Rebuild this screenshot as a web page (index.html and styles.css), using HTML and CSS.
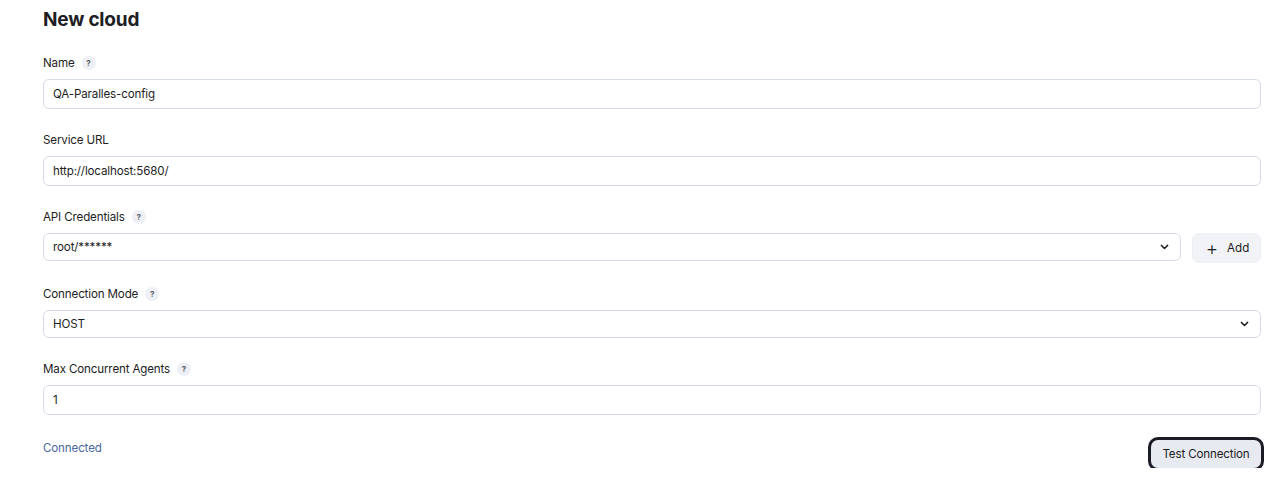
FILE: index.html
```html
<!DOCTYPE html>
<html lang="en">
<head>
	<meta charset="UTF-8">
	<title>New cloud</title>
	<link rel="stylesheet" href="styles.css">
</head>
<body>
	<div class="page">
		<h1 class="title">New cloud</h1>

		<div class="field">
			<div class="label">Name <span class="help">?</span></div>
			<div class="control input">QA-Paralles-config</div>
		</div>

		<div class="field">
			<div class="label">Service URL</div>
			<div class="control input">http://localhost:5680/</div>
		</div>

		<div class="field">
			<div class="label">API Credentials <span class="help">?</span></div>
			<div class="row">
				<div class="control select">
					<span>root/******</span>
					<svg class="chevron" viewBox="0 0 10 6" width="9" height="6"><path d="M1.5 1.2 L5 4.6 L8.5 1.2" fill="none" stroke="#1d1d22" stroke-width="1.6" stroke-linecap="round" stroke-linejoin="round"/></svg>
				</div>
				<button class="btn-add"><span class="plus">+</span>Add</button>
			</div>
		</div>

		<div class="field">
			<div class="label">Connection Mode <span class="help">?</span></div>
			<div class="control select">
				<span>HOST</span>
				<svg class="chevron" viewBox="0 0 10 6" width="9" height="6"><path d="M1.5 1.2 L5 4.6 L8.5 1.2" fill="none" stroke="#1d1d22" stroke-width="1.6" stroke-linecap="round" stroke-linejoin="round"/></svg>
			</div>
		</div>

		<div class="field">
			<div class="label">Max Concurrent Agents <span class="help">?</span></div>
			<div class="control input">1</div>
		</div>

		<div class="footer">
			<span class="status">Connected</span>
			<button class="btn-test">Test Connection</button>
		</div>
	</div>
</body>
</html>
```

FILE: styles.css
```css
body{
	margin: 0;
	background: #fff;
	color: #1e1e24;
	font-family: Inter, "Liberation Sans", sans-serif;
	font-size: 11.6px;
	letter-spacing: -0.15px;
}
.page{
	padding: 6px 19px 0 43px;
}
.title{
	margin: 0 0 21px;
	font-size: 19px;
	line-height: 28px;
	font-weight: 700;
	letter-spacing: -0.2px;
}
.field{
	margin-bottom: 23px;
}
.label{
	display: flex;
	align-items: center;
	height: 16px;
	margin-bottom: 8px;
}
.help{
	display: inline-flex;
	align-items: center;
	justify-content: center;
	width: 14px;
	height: 14px;
	margin-left: 7px;
	border-radius: 50%;
	background: #eef0f5;
	color: #55585f;
	font-size: 8px;
	font-weight: 700;
	letter-spacing: 0;
}
.control{
	box-sizing: border-box;
	display: flex;
	align-items: center;
	border: 1px solid #d5dce7;
	border-radius: 6px;
	padding: 0 11px 0 9px;
	background: #fff;
}
.input{
	height: 30px;
}
.select{
	height: 28px;
	justify-content: space-between;
}
.row{
	display: flex;
	align-items: flex-start;
	gap: 11px;
}
.row .select{
	flex: 1;
}
.btn-add{
	width: 69px;
	height: 30px;
	border: 1px solid #eceef3;
	border-radius: 7px;
	background: #f2f3f7;
	color: #1e1e24;
	font-family: inherit;
	font-size: 11.6px;
	display: flex;
	align-items: center;
	justify-content: center;
	padding: 0 0 0 2px;
}
.plus{
	font-size: 19px;
	font-weight: 300;
	margin-right: 9px;
	line-height: 1;
}
.footer{
	display: flex;
	justify-content: space-between;
	align-items: flex-start;
	margin-top: 25px;
}
.status{
	line-height: 16px;
	color: #4a6aa0;
}
.btn-test{
	height: 28px;
	width: 110px;
	border: none;
	border-radius: 7px;
	box-shadow: 0 0 0 3px #1b1b26;
	background: #e8eaf1;
	color: #1e1e24;
	font-family: inherit;
	font-size: 11.6px;
	letter-spacing: -0.15px;
	padding: 0;
}
```
